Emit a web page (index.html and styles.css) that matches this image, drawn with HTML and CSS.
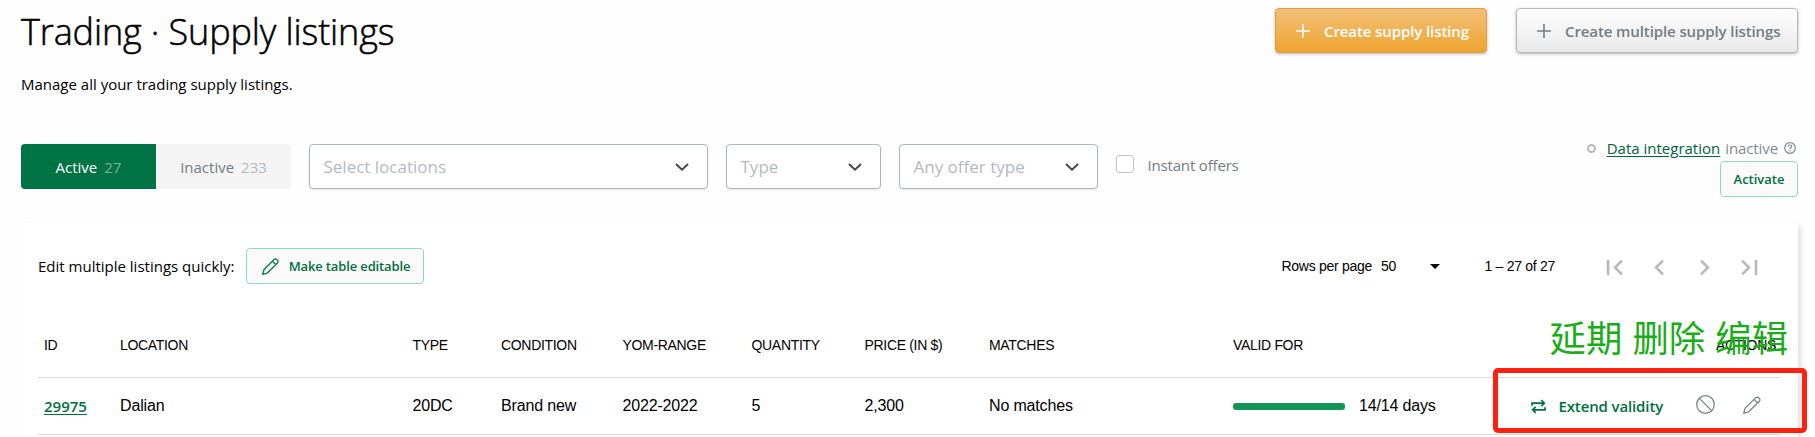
FILE: index.html
```html
<!DOCTYPE html>
<html lang="en">
<head>
<meta charset="utf-8">
<title>Trading · Supply listings</title>
<link rel="stylesheet" href="styles.css">
</head>
<body>
<main class="page">
  <header class="header">
    <div class="intro">
      <h1 class="title">Trading · Supply listings</h1>
      <p class="subtitle">Manage all your trading supply listings.</p>
    </div>
    <div class="header-actions">
      <button class="btn btn-primary"><svg class="plus" viewBox="0 0 14 14"><path d="M7 0v14M0 7h14"/></svg>Create supply listing</button>
      <button class="btn btn-default"><svg class="plus" viewBox="0 0 14 14"><path d="M7 0v14M0 7h14"/></svg>Create multiple supply listings</button>
    </div>
  </header>

  <section class="filters">
    <div class="tabs">
      <div class="tab tab-active">Active<span class="count">27</span></div>
      <div class="tab">Inactive<span class="count">233</span></div>
    </div>
    <div class="select select-location">Select locations<svg class="chevron" viewBox="0 0 14 8"><path d="M1 1l6 5.6L13 1"/></svg></div>
    <div class="select select-type">Type<svg class="chevron" viewBox="0 0 14 8"><path d="M1 1l6 5.6L13 1"/></svg></div>
    <div class="select select-offer">Any offer type<svg class="chevron" viewBox="0 0 14 8"><path d="M1 1l6 5.6L13 1"/></svg></div>
    <label class="check"><span class="box"></span>Instant offers</label>
    <div class="integration">
      <div class="status"><span class="ring"></span><a class="link">Data integration</a><span class="state">inactive</span>
        <svg class="help" viewBox="0 0 12 12"><circle cx="6" cy="6" r="5.3"/><path d="M4.2 4.8C4.2 3.6 5 3 6 3s1.8.6 1.8 1.6C7.8 5.8 6 5.8 6 7.1M6 8.1v1.2"/></svg>
      </div>
      <button class="btn-small activate">Activate</button>
    </div>
  </section>

  <section class="card">
    <div class="toolbar">
      <span class="hint">Edit multiple listings quickly:</span>
      <button class="btn-small edit"><svg class="pencil" viewBox="0 0 18 18"><path d="M.8 17.2L2 12.4 12.8 1.6a1.9 1.9 0 0 1 2.7 0l.9.9a1.9 1.9 0 0 1 0 2.7L5.6 16zM11 3.4L14.6 7"/></svg>Make table editable</button>
      <div class="pagination">
        <span class="rows-label">Rows per page</span><span class="rows-value">50</span><span class="caret"></span>
        <span class="range">1 – 27 of 27</span>
        <span class="pager">
          <svg class="page-icon" viewBox="0 0 24 24"><path d="M18.41 16.59L13.82 12l4.59-4.59L17 6l-6 6 6 6zM6 6h2v12H6z"/></svg>
          <svg class="page-icon" viewBox="0 0 24 24"><path d="M15.41 7.41L14 6l-6 6 6 6 1.41-1.41L10.83 12z"/></svg>
          <svg class="page-icon" viewBox="0 0 24 24"><path d="M10 6L8.59 7.41 13.17 12l-4.58 4.59L10 18l6-6z"/></svg>
          <svg class="page-icon" viewBox="0 0 24 24"><path d="M5.59 7.41L10.18 12l-4.59 4.59L7 18l6-6-6-6zM16 6h2v12h-2z"/></svg>
        </span>
      </div>
    </div>

    <div class="table">
      <div class="row head">
        <span>ID</span><span>LOCATION</span><span>TYPE</span><span>CONDITION</span><span>YOM-RANGE</span><span>QUANTITY</span><span>PRICE (IN $)</span><span>MATCHES</span><span>VALID FOR</span><span class="last">ACTIONS</span>
      </div>
      <div class="row">
        <a class="id">29975</a><span>Dalian</span><span>20DC</span><span>Brand new</span><span>2022-2022</span><span>5</span><span>2,300</span><span>No matches</span>
        <span class="validity"><span class="bar"></span>14/14 days</span>
        <span class="actions">
          <svg class="repeat" viewBox="0 0 15 15"><path d="M1 6.8V4.2h12M10.3 1.2l3 3-3 3M14 8.2v2.6H2M4.7 7.8l-3 3 3 3"/></svg>
          <span class="extend">Extend validity</span>
          <svg class="ban" viewBox="0 0 19 19"><circle cx="9.5" cy="9.5" r="8.8"/><path d="M3.3 3.3l12.4 12.4"/></svg>
          <svg class="pencil gray" viewBox="0 0 18 18"><path d="M.8 17.2L2 12.4 12.8 1.6a1.9 1.9 0 0 1 2.7 0l.9.9a1.9 1.9 0 0 1 0 2.7L5.6 16zM11 3.4L14.6 7"/></svg>
        </span>
      </div>
    </div>
  </section>

  <div class="note" lang="zh">延期 删除 编辑</div>
  <div class="highlight"></div>
</main>
</body>
</html>
```
FILE: styles.css
```css
* { box-sizing: border-box; }

body {
  margin: 0;
  background: #fefefe;
  color: #000;
  font: 15px/20px "Open Sans", "Noto Sans", sans-serif;
}

button { font-family: inherit; }

svg {
  flex: none;
  fill: none;
  stroke: currentColor;
}

.page {
  position: relative;
  height: 437px;
  overflow: hidden;
  padding: 7px 17px 0 21px;
}

/* Header */
.header {
  display: flex;
  justify-content: space-between;
  height: 137px;
}

.title {
  margin: 0 0 17px;
  font-size: 36px;
  line-height: 50px;
  font-weight: 300;
  letter-spacing: -0.12px;
  -webkit-text-stroke: 0.5px #000;
}

.subtitle { margin: 0; }

.header-actions {
  display: flex;
  align-items: flex-start;
  gap: 29px;
  padding-top: 1px;
}

.btn {
  display: flex;
  align-items: center;
  gap: 14px;
  height: 45px;
  padding: 0 17px 0 20px;
  border: 1px solid;
  border-radius: 4px;
  font-size: 15px;
  font-weight: 600;
  letter-spacing: -0.1px;
  white-space: nowrap;
  box-shadow: 0 1px 3px rgba(0, 0, 0, 0.3);
}

.btn-primary {
  width: 212px;
  color: #fff;
  border-color: #dda040;
  background: linear-gradient(#f3c078, #eea42f);
}

.btn-default {
  width: 282px;
  color: #727d85;
  border-color: #b4babe;
  background: linear-gradient(#fff, #e8e8e8);
}

.plus {
  width: 14px;
  height: 14px;
  stroke-width: 1.6;
}

/* Filters */
.filters {
  display: flex;
  height: 79px;
}

.tabs {
  display: flex;
  width: 270px;
  height: 45px;
  margin-right: 18px;
  border-radius: 4px;
  overflow: hidden;
  background: #f4f4f4;
}

.tab {
  display: flex;
  flex: 1;
  align-items: center;
  justify-content: center;
  gap: 7px;
  color: #727d85;
}

.tab-active {
  color: #fff;
  background: #007344;
}

.count { color: #b3b9bd; }
.tab-active .count { color: #75b394; }

.select {
  display: flex;
  align-items: center;
  justify-content: space-between;
  height: 45px;
  margin-right: 18px;
  padding: 0 18px 0 13.5px;
  border: 1px solid #b0b7bc;
  border-radius: 4px;
  background: #fff;
  color: #b3babf;
  font-size: 17px;
  box-shadow: 0 1px 2px rgba(0, 0, 0, 0.1);
}

.select-location { width: 399px; }
.select-type { width: 155px; }
.select-offer { width: 199px; }

.chevron {
  width: 14px;
  height: 8px;
  color: #444;
  stroke-width: 1.9;
}

.check {
  display: flex;
  align-items: center;
  gap: 13.5px;
  height: 42px;
  color: #727d85;
  letter-spacing: -0.17px;
}

.box {
  width: 18px;
  height: 18px;
  margin-top: -2px;
  border: 1px solid #bfc4c8;
  border-radius: 3px;
  background: #fff;
}

.integration {
  display: flex;
  flex-direction: column;
  align-items: flex-end;
  margin-left: auto;
  margin-top: -7px;
}

.status {
  display: flex;
  align-items: center;
  height: 22px;
  margin-bottom: 2px;
  padding-right: 2px;
  color: #808a92;
}

.ring {
  width: 9px;
  height: 9px;
  margin-right: 11px;
  border: 2px solid #b4babe;
  border-radius: 50%;
}

.link {
  margin-right: 5px;
  color: #00633b;
  text-decoration: underline;
  text-underline-offset: 2px;
}

.state { margin-right: 6px; letter-spacing: -0.1px; }

.help {
  width: 12px;
  height: 12px;
  stroke-width: 1.2;
}

.btn-small {
  display: flex;
  align-items: center;
  justify-content: center;
  height: 36px;
  padding: 0;
  border: 1px solid #8edcbd;
  border-radius: 4px;
  background: #fafafa;
  color: #006f42;
  font-size: 13px;
  font-weight: 600;
  white-space: nowrap;
}

.activate { width: 78px; }

/* Listing card */
.card {
  height: 230px;
  padding: 25px 17px 0;
  background: #fff;
  box-shadow: 3px 3px 5px rgba(0, 0, 0, 0.12);
}

.toolbar {
  display: flex;
  align-items: center;
  height: 36px;
}

.hint { width: 208px; }

.edit {
  width: 178px;
  gap: 10px;
  padding-left: 2px;
  letter-spacing: -0.13px;
}

.pencil {
  width: 17px;
  height: 17px;
  stroke-width: 1.5;
}

.edit .pencil { color: #15804f; }

.pagination {
  display: flex;
  align-items: center;
  height: 36px;
  margin-left: auto;
  font: 14px/16px "Liberation Sans", Arial, sans-serif;
  letter-spacing: -0.28px;
}

.rows-label { width: 99.5px; }
.rows-value { width: 48.5px; }

.caret {
  width: 10px;
  margin-right: 45px;
  border: 5px solid transparent;
  border-top-color: #000;
  border-bottom: 0;
}

.range { width: 114px; }

.pager {
  display: flex;
  gap: 14px;
  margin: 3px 16.5px 0 0;
}

.page-icon {
  width: 31px;
  height: 31px;
  fill: #b8b8b8;
  stroke: none;
}

/* Table */
.table {
  margin-top: 29px;
  font: 16px/20px "Liberation Sans", Arial, sans-serif;
  letter-spacing: -0.16px;
}

.row {
  display: grid;
  grid-template-columns: 76px 292.5px 88.5px 121.5px 129px 113px 124.5px 244px 1fr auto;
  align-items: center;
  height: 57px;
  padding: 0 5px 0 6px;
  border-bottom: 1px solid #d9dbdc;
}

.head {
  height: 65px;
  font-size: 14px;
  letter-spacing: -0.32px;
}

.id {
  color: #00703f;
  font: 600 15px/20px "Open Sans", sans-serif;
  letter-spacing: 0;
  text-decoration: underline;
  text-underline-offset: 2px;
}

.validity {
  display: flex;
  align-items: center;
  gap: 14px;
}

.bar {
  width: 112px;
  height: 7px;
  border-radius: 3px;
  background: #149558;
}

.actions {
  display: flex;
  align-items: center;
  padding-right: 15px;
  color: #727d85;
}

.repeat {
  width: 15px;
  height: 15px;
  margin-right: 13px;
  color: #00703f;
  stroke-width: 1.7;
}

.extend {
  width: 137.5px;
  color: #00703f;
  font: 600 15px/20px "Open Sans", sans-serif;
  letter-spacing: -0.13px;
}

.ban {
  width: 19px;
  height: 19px;
  margin: -3px 28px 0 0;
  stroke-width: 1.2;
}

.gray {
  width: 18px;
  height: 18px;
  margin-top: -3px;
  stroke-width: 1.2;
}

/* Annotations laid over the table */
.note {
  position: absolute;
  top: 310px;
  left: 1549.5px;
  color: #1aad19;
  font: 36.4px/53px "Noto Sans CJK SC", sans-serif;
  word-spacing: 2px;
  white-space: nowrap;
}

.highlight {
  position: absolute;
  top: 368px;
  left: 1493px;
  width: 314px;
  height: 65px;
  border: 5px solid #ff2010;
  border-radius: 5px;
}
```
